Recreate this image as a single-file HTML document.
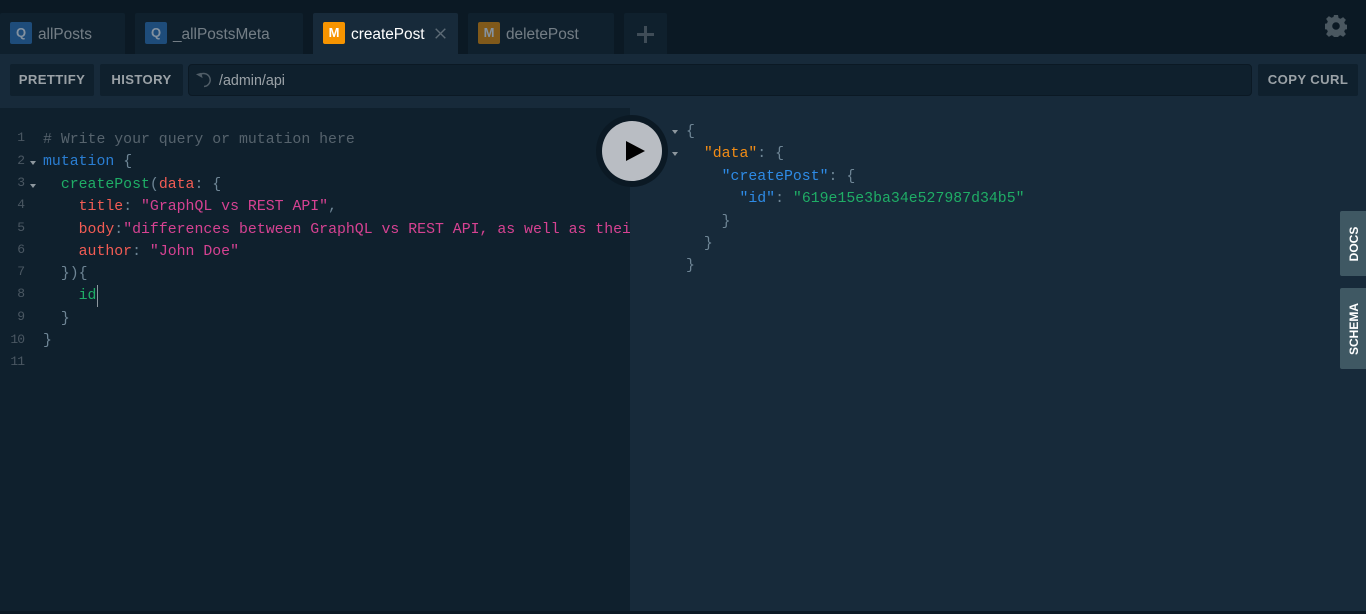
<!DOCTYPE html>
<html><head><meta charset="utf-8"><style>
html,body{margin:0;padding:0;width:1366px;height:614px;overflow:hidden;background:#0b1924}
*{box-sizing:border-box}
.a{position:absolute}
.tab{position:absolute;top:13px;height:41px;background:#0f202d;border-radius:2px 2px 0 0}
.tab.on{background:#172a3a}
.ic{position:absolute;left:10px;top:9px;width:22px;height:22px;border-radius:2px;color:#8492a0;font:bold 13px/22px "Liberation Sans",sans-serif;text-align:center}
.t{position:absolute;left:38px;top:1px;font:15.4px/41px "Liberation Sans",sans-serif;color:rgba(255,255,255,.42);white-space:nowrap}
.btn{position:absolute;top:64px;height:32px;background:#0f202d;border-radius:2px;color:rgba(255,255,255,.58);font:bold 13.1px/32px "Liberation Sans",sans-serif;letter-spacing:.4px;text-align:center;white-space:nowrap}
.code{position:absolute;white-space:pre;font:14.85px/22px "Liberation Mono",monospace;color:#5f7a8c}
.n{position:absolute;left:0;width:24px;text-align:right;font:13px/22px "Liberation Mono",monospace;letter-spacing:-1px;color:#4a5762}
.f{position:absolute;width:0;height:0;border-left:3px solid transparent;border-right:3px solid transparent;border-top:4px solid #8d979e}
.c{color:#56636d}.k{color:#2a7ed3}.y{color:#1fad66}.r{color:#f25c54}.s{color:#d64292}.p{color:#6e8595}.o{color:#f18c16}.b{color:#2e8be6}
.side{position:absolute;left:1340px;width:26px;background:#3f5863;border-radius:2px 0 0 2px}
.side span{position:absolute;left:14px;top:50%;transform:translate(-50%,-50%) rotate(-90deg);color:#fff;font:bold 12px/14px "Liberation Sans",sans-serif;white-space:nowrap}
</style></head><body>
<div class="a" style="left:0;top:54px;width:1366px;height:557px;background:#172a3a"></div>

<div class="tab" style="left:0;width:125px"><div class="ic" style="background:#1e4c7a">Q</div><div class="t">allPosts</div></div>
<div class="tab" style="left:135px;width:168px"><div class="ic" style="background:#1e4c7a">Q</div><div class="t">_allPostsMeta</div></div>
<div class="tab on" style="left:313px;width:145px"><div class="ic" style="background:#f79400;color:#fff">M</div><div class="t" style="color:#fff">createPost</div>
<svg class="a" style="left:122px;top:15px" width="11" height="11" viewBox="0 0 11 11"><path d="M.7.7l9.6 9.6M10.3.7L.7 10.3" stroke="#5d6b76" stroke-width="1.4" fill="none"/></svg></div>
<div class="tab" style="left:468px;width:146px"><div class="ic" style="background:#80591a">M</div><div class="t">deletePost</div></div>
<div class="tab" style="left:624px;width:43px"><svg class="a" style="left:13px;top:13px" width="17" height="17" viewBox="0 0 17 17"><path d="M7 0h3v7h7v3h-7v7H7v-7H0V7h7z" fill="#3f4c57"/></svg></div>

<svg class="a" style="left:1325px;top:15px" width="22" height="22" viewBox="0 0 22 22"><path fill="#4a5760" fill-rule="evenodd" d="M9 0h4l.6 3 2 .8 2.5-1.7 2.8 2.8-1.7 2.5.8 2 3 .6v4l-3 .6-.8 2 1.7 2.5-2.8 2.8-2.5-1.7-2 .8-.6 3H9l-.6-3-2-.8-2.5 1.7-2.8-2.8 1.7-2.5-.8-2-3-.6V9l3-.6.8-2-1.700-2.500 2.800-2.800 2.500 1.700 2-.8zM11 7.200a3.800 3.800 0 1 0 0 7.600a3.800 3.800 0 0 0 0-7.600z"/></svg>

<div class="btn" style="left:10px;width:84px">PRETTIFY</div>
<div class="btn" style="left:100px;width:83px">HISTORY</div>
<div class="a" style="left:188px;top:64px;width:1064px;height:32px;background:#0f202d;border:1px solid #0b1924;border-radius:4px"></div>
<svg class="a" style="left:195px;top:71px" width="18" height="18" viewBox="0 0 18 18"><path d="M4 4.500A6.500 6.500 0 1 1 9 15.500" stroke="#505d67" stroke-width="1.500" fill="none"/><path d="M1.500 2.500h5.500v5.500z" fill="#505d67" transform="rotate(-15 4 5)"/></svg>
<div class="a" style="left:219px;top:65px;font:14.3px/32px 'Liberation Sans',sans-serif;color:rgba(255,255,255,.58)">/admin/api</div>
<div class="btn" style="left:1258px;width:100px">COPY CURL</div>

<div class="a" style="left:0;top:108px;width:630px;height:503px;background:#0f202d;overflow:hidden">
<div class="n" style="top:19px">1</div><div class="n" style="top:42px">2</div><div class="n" style="top:64px">3</div><div class="n" style="top:86px">4</div><div class="n" style="top:109px">5</div><div class="n" style="top:131px">6</div><div class="n" style="top:153px">7</div><div class="n" style="top:175px">8</div><div class="n" style="top:198px">9</div><div class="n" style="top:221px">10</div><div class="n" style="top:243px">11</div>
<div class="f" style="left:30px;top:53px"></div><div class="f" style="left:30px;top:76px"></div>
<div class="code" style="left:43px;top:21px"><span class="c"># Write your query or mutation here</span></div>
<div class="code" style="left:43px;top:43px"><span class="k">mutation</span> <span class="p">{</span></div>
<div class="code" style="left:43px;top:66px">  <span class="y">createPost</span><span class="p">(</span><span class="r">data</span><span class="p">: {</span></div>
<div class="code" style="left:43px;top:88px">    <span class="r">title</span><span class="p">: </span><span class="s">"GraphQL vs REST API"</span><span class="p">,</span></div>
<div class="code" style="left:43px;top:111px">    <span class="r">body</span><span class="p">:</span><span class="s">"differences between GraphQL vs REST API, as well as their</span></div>
<div class="code" style="left:43px;top:133px">    <span class="r">author</span><span class="p">: </span><span class="s">"John Doe"</span></div>
<div class="code" style="left:43px;top:155px">  <span class="p">}){</span></div>
<div class="code" style="left:43px;top:177px">    <span class="y">id</span></div>
<div class="a" style="left:97px;top:177px;width:1px;height:22px;background:#8d979e"></div>
<div class="code" style="left:43px;top:200px">  <span class="p">}</span></div>
<div class="code" style="left:43px;top:222px"><span class="p">}</span></div>
</div>

<div class="f" style="left:672px;top:130px"></div><div class="f" style="left:672px;top:152px"></div>
<div class="code" style="left:686px;top:121px"><span class="p">{</span></div>
<div class="code" style="left:686px;top:143px">  <span class="o">"data"</span><span class="p">: {</span></div>
<div class="code" style="left:686px;top:166px">    <span class="b">"createPost"</span><span class="p">: {</span></div>
<div class="code" style="left:686px;top:188px">      <span class="b">"id"</span><span class="p">: </span><span class="y">"619e15e3ba34e527987d34b5"</span></div>
<div class="code" style="left:686px;top:211px">    <span class="p">}</span></div>
<div class="code" style="left:686px;top:233px">  <span class="p">}</span></div>
<div class="code" style="left:686px;top:255px"><span class="p">}</span></div>

<div class="a" style="left:596px;top:115px;width:72px;height:72px;border-radius:50%;background:#0b1924"></div>
<div class="a" style="left:602px;top:121px;width:60px;height:60px;border-radius:50%;background:#b9bdc3"></div>
<svg class="a" style="left:626px;top:141px" width="19" height="20" viewBox="0 0 19 20"><path d="M0 0l19 10L0 20z" fill="#000"/></svg>

<div class="side" style="top:211px;height:65px"><span>DOCS</span></div>
<div class="side" style="top:288px;height:81px"><span>SCHEMA</span></div>
</body></html>
